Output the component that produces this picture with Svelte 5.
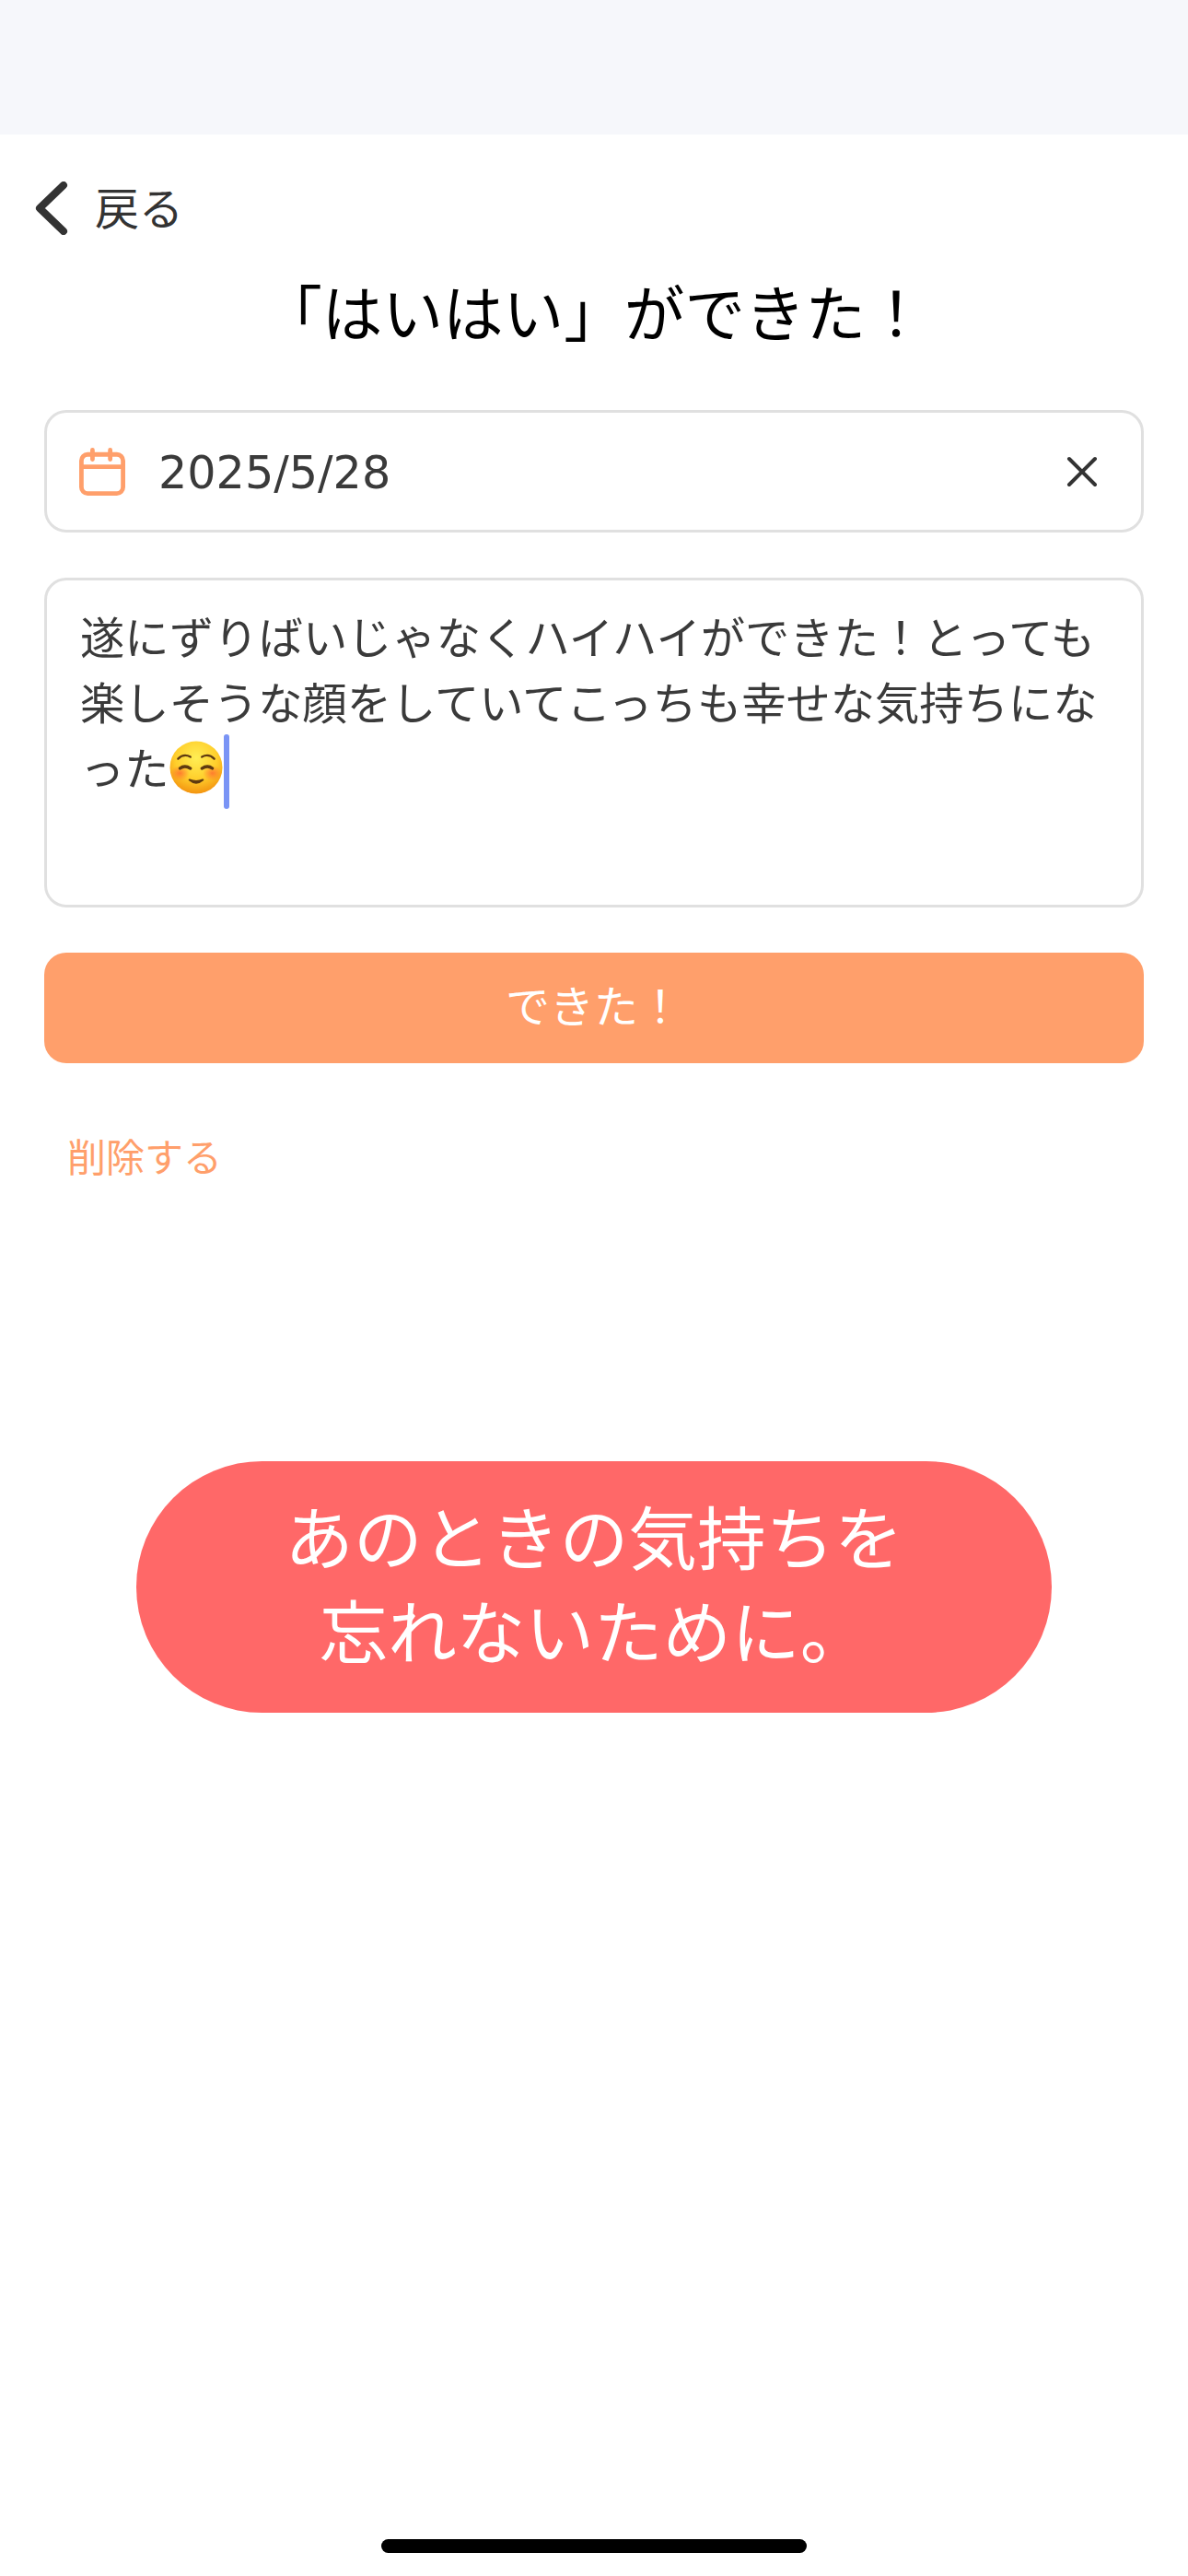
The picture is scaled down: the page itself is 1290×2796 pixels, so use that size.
<script lang="ts">
	let date = '2025/5/28';
	let memo = '遂にずりばいじゃなくハイハイができた！とっても楽しそうな顔をしていてこっちも幸せな気持ちになった';
</script>

<div class="page">
	<header class="status"></header>

	<main class="content">
		<a class="back" href="#back">
			<svg class="chevron" viewBox="0 0 36 58" width="36" height="58" fill="none" aria-hidden="true">
				<path d="M31 4 L5 29 L31 54" stroke="#333" stroke-width="8" stroke-linecap="round" stroke-linejoin="round" />
			</svg>
			<span>戻る</span>
		</a>

		<h1 class="title">「はいはい」ができた！</h1>

		<form class="form">
			<div class="field date">
				<svg class="calendar" viewBox="0 0 52 54" width="50" height="52" fill="none" aria-hidden="true">
					<rect x="2.5" y="7.5" width="47" height="44" rx="7" stroke="#ff9f6b" stroke-width="5" />
					<path d="M2.5 21.5 H49.5 M15 2.5 V13 M35 2.5 V13" stroke="#ff9f6b" stroke-width="5" stroke-linecap="round" />
				</svg>
				<span class="date-value">{date}</span>
				<svg class="clear" viewBox="0 0 34 34" width="34" height="34" fill="none" aria-hidden="true">
					<path d="M3 3 L31 31 M31 3 L3 31" stroke="#333" stroke-width="4" stroke-linecap="round" />
				</svg>
			</div>

			<div class="field memo">
				{memo}<svg class="emoji" viewBox="0 0 56 56" width="58" height="58" aria-hidden="true">
					<defs>
						<radialGradient id="face" cx="50%" cy="32%" r="72%">
							<stop offset="0" stop-color="#ffee55" />
							<stop offset="0.55" stop-color="#ffcf2c" />
							<stop offset="1" stop-color="#f28c0c" />
						</radialGradient>
						<radialGradient id="blush">
							<stop offset="0" stop-color="#ff6a30" stop-opacity="0.8" />
							<stop offset="1" stop-color="#ff6a30" stop-opacity="0" />
						</radialGradient>
					</defs>
					<circle cx="28" cy="28" r="27.5" fill="url(#face)" />
					<ellipse cx="11" cy="34" rx="10" ry="8" fill="url(#blush)" />
					<ellipse cx="45" cy="34" rx="10" ry="8" fill="url(#blush)" />
					<g fill="none" stroke="#5f3a10" stroke-linecap="round">
						<path d="M9 19 Q15 13 22 17 M34 17 Q41 13 47 19" stroke-width="2.2" />
						<path d="M11 29 Q16 25 22 29 M34 29 Q40 25 45 29" stroke-width="3.2" />
					</g>
					<path d="M21 41 Q28 47 35 41 Q28 44 21 41Z" fill="#5f3a10" stroke="#5f3a10" stroke-width="2" stroke-linejoin="round" />
				</svg><span class="caret"></span>
			</div>

			<button class="submit" type="button"><span>できた！</span></button>
		</form>

		<a class="delete" href="#delete">削除する</a>

		<div class="pill">あのときの気持ちを<br />忘れないために。</div>
	</main>

	<div class="home-indicator"></div>
</div>

<style>
	:global(body) {
		margin: 0;
		background: #fff;
	}

	.page {
		position: relative;
		display: flex;
		flex-direction: column;
		height: 2796px;
		overflow: hidden;
		color: #333;
		font-family: "DejaVu Sans", "Noto Sans CJK JP", sans-serif;
	}

	.status {
		height: 146px;
		background: #f6f7fb;
	}

	.content {
		display: flex;
		flex-direction: column;
		padding: 0 48px;
	}

	.back {
		display: flex;
		align-items: center;
		gap: 29px;
		height: 58px;
		margin: 48px 0 0 -10px;
		color: #333;
		font-size: 48px;
		text-decoration: none;
	}

	.chevron {
		margin-top: 6px;
	}

	.title {
		margin: 45px 0 0;
		font-size: 65.6px;
		line-height: 90px;
		font-weight: 400;
		color: #000;
		text-align: center;
	}

	.form {
		display: flex;
		flex-direction: column;
		gap: 49px;
		margin-top: 58px;
	}

	.field {
		box-sizing: border-box;
		border: 3px solid #e0e0e0;
		border-radius: 24px;
		background: #fff;
		font-size: 48.3px;
	}

	.date {
		display: flex;
		align-items: center;
		height: 133px;
		padding: 0 47px 0 35px;
	}

	.date-value {
		flex: 1;
		margin: 2px 0 0 36px;
		font-size: 49.2px;
		color: #3a3a3a;
	}

	.memo {
		height: 358px;
		padding: 28px 30px 0 36px;
		line-height: 71px;
		color: #3a3a3a;
	}

	.emoji {
		margin-block: -10px;
		vertical-align: 0;
	}

	.caret {
		display: inline-block;
		width: 6px;
		height: 81px;
		margin-block: -20px;
		margin-left: 1px;
		border-radius: 3px;
		background: #7a94f5;
		vertical-align: -6px;
	}

	.submit {
		height: 120px;
		padding: 0 0 10px;
		border: 0;
		border-radius: 24px;
		background: #ff9f6b;
		color: #fff;
		font-family: inherit;
		font-size: 48px;
	}

	.delete {
		margin: 73px 0 0 25px;
		color: #ff9f6b;
		font-size: 42px;
		line-height: 62px;
		text-decoration: none;
	}

	.pill {
		align-self: center;
		box-sizing: border-box;
		width: 994px;
		height: 273px;
		margin-top: 297px;
		padding-top: 36px;
		border-radius: 137px;
		background: #ff6868;
		color: #fff;
		font-size: 74.6px;
		line-height: 102px;
		text-align: center;
	}

	.home-indicator {
		position: absolute;
		left: 414px;
		bottom: 25px;
		width: 462px;
		height: 15px;
		border-radius: 8px;
		background: #000;
	}
</style>
